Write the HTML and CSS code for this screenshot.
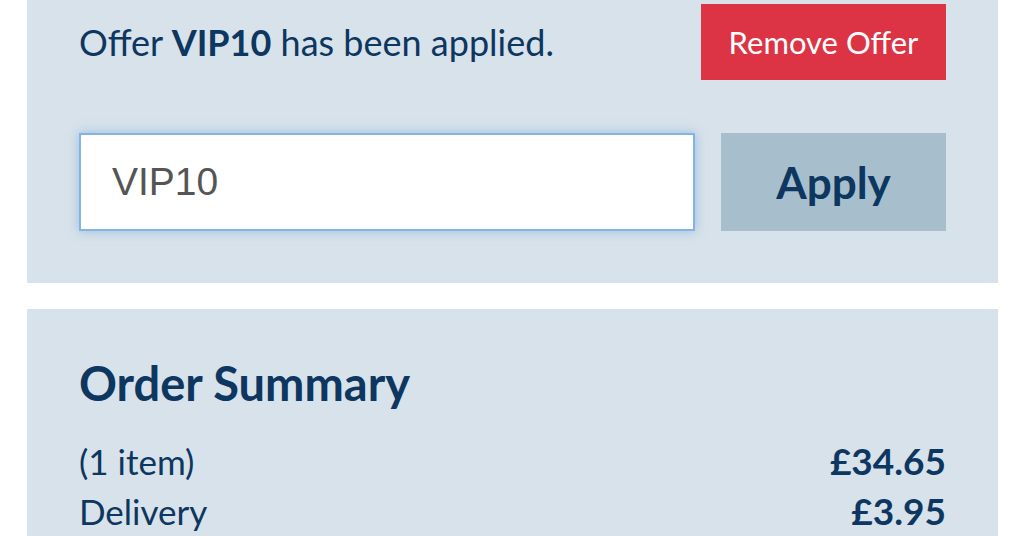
FILE: index.html
```html
<!DOCTYPE html>
<html>
<head>
<meta charset="utf-8">
<link rel="stylesheet" href="styles.css">
</head>
<body>
<div class="page">
  <section class="panel offer">
    <div class="offer-row">
      <p class="offer-text">Offer <strong>VIP10</strong> has been applied.</p>
      <button class="btn-remove">Remove Offer</button>
    </div>
    <div class="code-row">
      <input class="code-input" type="text" value="VIP10">
      <button class="btn-apply">Apply</button>
    </div>
  </section>
  <section class="panel summary">
    <h2 class="summary-title">Order Summary</h2>
    <div class="line"><span>(1 item)</span><span class="price">£34.65</span></div>
    <div class="line"><span>Delivery</span><span class="price">£3.95</span></div>
  </section>
</div>
</body>
</html>
```

FILE: styles.css
```css
html, body {
  margin: 0;
  padding: 0;
  background: #ffffff;
}
body {
  font-family: "Lato", "Liberation Sans", sans-serif;
  color: #0d3660;
}
.page {
  width: 971px;
  margin-left: 27px;
  display: flex;
  flex-direction: column;
  gap: 26px;
}
.panel {
  background: #d7e2ea;
  padding: 0 52px;
}
.offer {
  padding-top: 4px;
  padding-bottom: 52px;
}
.offer-row {
  display: flex;
  justify-content: space-between;
  align-items: center;
  height: 76px;
}
.offer-text {
  margin: 0;
  font-size: 36px;
  font-weight: 400;
}
.offer-text strong {
  font-weight: 700;
}
.btn-remove {
  width: 245px;
  height: 76px;
  border: 0;
  background: #dc3444;
  color: #ffffff;
  font-family: inherit;
  font-size: 31px;
  padding: 0;
}
.code-row {
  margin-top: 53px;
  display: flex;
  gap: 26px;
}
.code-input {
  flex: 1;
  height: 98px;
  box-sizing: border-box;
  border: 2px solid #86b4e2;
  box-shadow: 0 0 10px rgba(110, 165, 225, 0.6);
  background: #ffffff;
  padding: 0 31px;
  font-family: "Liberation Sans", Arial, sans-serif;
  font-size: 39px;
  color: #555555;
  outline: none;
}
.btn-apply {
  width: 225px;
  height: 98px;
  border: 0;
  background: #a7bfcc;
  color: #0d3660;
  font-family: inherit;
  font-weight: 700;
  font-size: 44px;
  padding: 0;
}
.summary {
  padding-top: 46px;
  padding-bottom: 20px;
}
.summary-title {
  margin: 0 0 25px;
  font-size: 47px;
  font-weight: 700;
  line-height: 56px;
}
.line {
  display: flex;
  justify-content: space-between;
  font-size: 35px;
  line-height: 50px;
}
.price {
  font-weight: 700;
  font-size: 37px;
}
```
